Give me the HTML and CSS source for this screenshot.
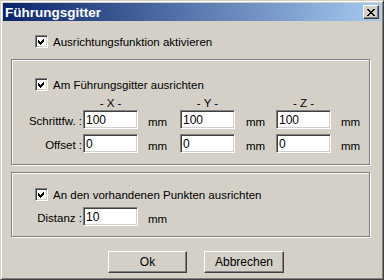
FILE: index.html
```html
<!DOCTYPE html>
<html lang="de">
<head>
  <meta charset="UTF-8" />
  <title>Führungsgitter</title>
  <link rel="stylesheet" href="styles.css">
</head>
<body>
  <div class="window">
    <div class="titlebar">
      <span class="title">Führungsgitter</span>
      <span class="close">
        <svg width="8" height="7" viewBox="0 0 8 7" shape-rendering="crispEdges">
          <path d="M0 0h2v1h-2zM6 0h2v1h-2zM1 1h2v1h-2zM5 1h2v1h-2zM2 2h4v1h-4zM3 3h2v1h-2zM2 4h4v1h-4zM1 5h2v1h-2zM5 5h2v1h-2zM0 6h2v1h-2zM6 6h2v1h-2z" fill="#000"/>
        </svg>
      </span>
    </div>
    <div class="content">
      <div class="check top-check">
        <span class="box"><svg width="11" height="11" viewBox="0 0 11 11" shape-rendering="crispEdges"><path d="M2 4L4 6L8 2L8 5L4 9L2 7Z" fill="#000"/></svg></span>
        <span>Ausrichtungsfunktion aktivieren</span>
      </div>

      <div class="group grid-group">
        <div class="check">
          <span class="box"><svg width="11" height="11" viewBox="0 0 11 11" shape-rendering="crispEdges"><path d="M2 4L4 6L8 2L8 5L4 9L2 7Z" fill="#000"/></svg></span>
          <span>Am Führungsgitter ausrichten</span>
        </div>
        <div class="row axis-row">
          <span class="label"></span>
          <span class="axis">- X -</span>
          <span class="unit"></span>
          <span class="axis">- Y -</span>
          <span class="unit u2"></span>
          <span class="axis">- Z -</span>
        </div>
        <div class="row">
          <span class="label">Schrittfw. :</span>
          <span class="field">100</span>
          <span class="unit">mm</span>
          <span class="field">100</span>
          <span class="unit u2">mm</span>
          <span class="field">100</span>
          <span class="unit">mm</span>
        </div>
        <div class="row second">
          <span class="label">Offset :</span>
          <span class="field">0</span>
          <span class="unit">mm</span>
          <span class="field">0</span>
          <span class="unit u2">mm</span>
          <span class="field">0</span>
          <span class="unit">mm</span>
        </div>
      </div>

      <div class="group point-group">
        <div class="check">
          <span class="box"><svg width="11" height="11" viewBox="0 0 11 11" shape-rendering="crispEdges"><path d="M2 4L4 6L8 2L8 5L4 9L2 7Z" fill="#000"/></svg></span>
          <span>An den vorhandenen Punkten ausrichten</span>
        </div>
        <div class="row distance">
          <span class="label">Distanz :</span>
          <span class="field">10</span>
          <span class="unit">mm</span>
        </div>
      </div>

      <div class="buttons">
        <button class="btn ok">Ok</button>
        <button class="btn cancel">Abbrechen</button>
      </div>
    </div>
  </div>
</body>
</html>
```

FILE: styles.css
```css
body {
  margin: 0;
  font-family: 'Liberation Sans', Arial, sans-serif;
  font-size: 11.5px;
  color: #000;
  background-color: #d4d0c8;
}
.window {
  width: 384px;
  height: 280px;
  box-sizing: border-box;
  padding: 2px;
  background-color: #d4d0c8;
  border: 1px solid;
  border-color: #d4d0c8 #404040 #404040 #d4d0c8;
  box-shadow: inset 1px 1px #fff, inset -1px -1px #808080;
}
.titlebar {
  height: 18px;
  display: flex;
  align-items: center;
  justify-content: space-between;
  padding: 0 2px 0 2px;
  background: linear-gradient(to right, #0a246a, #a6caf0);
}
.title {
  color: #fff;
  font-weight: bold;
  font-size: 13.5px;
}
.close {
  width: 16px;
  height: 14px;
  box-sizing: border-box;
  display: flex;
  align-items: center;
  justify-content: center;
  background-color: #d4d0c8;
  border: 1px solid;
  border-color: #fff #404040 #404040 #fff;
  box-shadow: inset -1px -1px #808080;
}
.content {
  padding: 0 8px;
}
.check {
  display: flex;
  align-items: center;
  gap: 5px;
  height: 13px;
  margin-left: 23px;
}
.top-check {
  margin-top: 14px;
  margin-left: 24px;
}
.box {
  width: 13px;
  height: 13px;
  box-sizing: border-box;
  display: flex;
  background-color: #fff;
  border: 1px solid;
  border-color: #808080 #fff #fff #808080;
  box-shadow: inset 1px 1px #404040, inset -1px -1px #d4d0c8;
}
.group {
  width: 359px;
  box-sizing: border-box;
  border: 1px solid #808080;
  box-shadow: inset 1px 1px #fff, 1px 1px #fff;
}
.grid-group {
  margin-top: 11px;
  padding: 18px 0 11px 0;
}
.point-group {
  margin-top: 7px;
  padding: 15px 0 10px 0;
}
.row {
  display: flex;
  align-items: center;
  height: 19px;
}
.axis-row {
  margin-top: 5px;
  height: 14px;
}
.row.second {
  margin-top: 5px;
}
.row.distance {
  margin-top: 6px;
}
.label {
  width: 71px;
  flex: none;
  text-align: right;
  padding: 3px 1px 0 0;
  box-sizing: border-box;
}
.axis {
  width: 55px;
  text-align: center;
  flex: none;
}
.field {
  width: 55px;
  height: 19px;
  flex: none;
  box-sizing: border-box;
  padding: 2px 0 0 2px;
  font-size: 12px;
  background-color: #fff;
  border: 1px solid;
  border-color: #808080 #fff #fff #808080;
  box-shadow: inset 1px 1px #404040, inset -1px -1px #d4d0c8;
}
.unit {
  width: 42px;
  flex: none;
  box-sizing: border-box;
  padding: 4px 0 0 10px;
}
.unit.u2 {
  width: 41px;
  padding-left: 11px;
}
.buttons {
  display: flex;
  gap: 17px;
  margin-top: 14px;
  padding-left: 97px;
}
.btn {
  height: 22px;
  padding: 0;
  font-family: inherit;
  font-size: 12px;
  color: #000;
  background-color: #d4d0c8;
  border: 1px solid;
  border-color: #fff #404040 #404040 #fff;
  box-shadow: inset -1px -1px #808080;
}
.btn.ok {
  width: 79px;
}
.btn.cancel {
  width: 80px;
}
```
